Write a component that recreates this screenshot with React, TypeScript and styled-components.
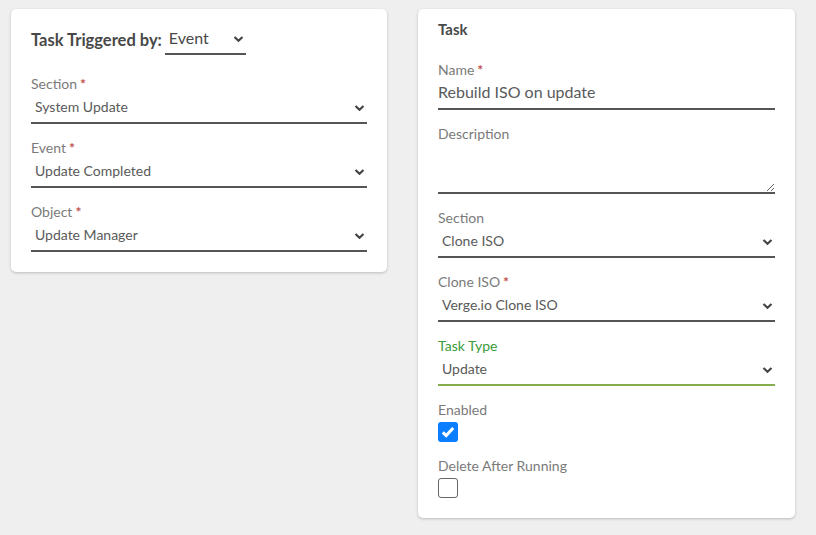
import React from "react";
import styled, { createGlobalStyle } from "styled-components";

const GlobalStyle = createGlobalStyle`
  html, body {
    margin: 0;
    padding: 0;
    background: #efefef;
    font-family: "Lato", "Liberation Sans", sans-serif;
  }
`;

const Page = styled.div`
  display: flex;
  align-items: flex-start;
  gap: 31px;
  padding: 9px 11px;
`;

const Card = styled.div<{ $width: number }>`
  width: ${(p) => p.$width}px;
  box-sizing: border-box;
  background: #fff;
  border-radius: 5px;
  box-shadow: 0 1px 3px rgba(0, 0, 0, 0.22);
  display: flex;
  flex-direction: column;
`;

const TriggerCard = styled(Card)`
  padding: 15px 20px 20px;
  gap: 20px;
`;

const TaskCard = styled(Card)`
  padding: 11px 20px 20px;
`;

const TitleRow = styled.div`
  display: flex;
  align-items: center;
  gap: 3px;
`;

const Title = styled.div`
  font-size: 16.5px;
  font-weight: 700;
  color: #484848;
  line-height: 20px;
`;

const CardTitle = styled.div`
  font-size: 15px;
  font-weight: 700;
  color: #484848;
  line-height: 18px;
  margin-bottom: 23px;
`;

const Fields = styled.div`
  display: flex;
  flex-direction: column;
  gap: 15px;
`;

const Field = styled.div`
  display: flex;
  flex-direction: column;
`;

const Label = styled.div<{ $focus?: boolean }>`
  font-size: 14px;
  line-height: 18px;
  color: ${(p) => (p.$focus ? "#3a9d3a" : "#7a7a7a")};
`;

const Required = styled.span`
  color: #c0504d;
  font-weight: 700;
  margin-left: 3px;
`;

const SelectWrap = styled.div<{ $focus?: boolean; $width?: number }>`
  position: relative;
  height: 31px;
  width: ${(p) => (p.$width ? `${p.$width}px` : "100%")};
  box-sizing: border-box;
  border-bottom: 2px solid ${(p) => (p.$focus ? "#86ad4c" : "#555")};
`;

const NativeSelect = styled.select<{ $big?: boolean }>`
  appearance: none;
  -webkit-appearance: none;
  border: none;
  outline: none;
  background: transparent;
  width: 100%;
  height: 100%;
  padding: 0 24px 2px 4px;
  font-family: inherit;
  font-size: ${(p) => (p.$big ? "16px" : "14px")};
  color: ${(p) => (p.$big ? "#484848" : "#5a5a5a")};
`;

const Chevron = styled.svg`
  position: absolute;
  right: 2px;
  top: 50%;
  transform: translateY(-50%);
  pointer-events: none;
`;

const TextInput = styled.input`
  height: 31px;
  box-sizing: border-box;
  border: none;
  border-bottom: 2px solid #555;
  outline: none;
  padding: 0 0 4px;
  font-family: inherit;
  font-size: 16px;
  color: #5a5a5a;
`;

const TextArea = styled.textarea`
  height: 51px;
  box-sizing: border-box;
  border: none;
  border-bottom: 2px solid #555;
  outline: none;
  padding: 0;
  font-family: inherit;
  font-size: 14px;
  color: #5a5a5a;
  resize: vertical;
`;

const Box = styled.div<{ $checked?: boolean }>`
  margin-top: 3px;
  width: 20px;
  height: 20px;
  box-sizing: border-box;
  border-radius: 3px;
  background: ${(p) => (p.$checked ? "#0b7dff" : "#fff")};
  border: ${(p) => (p.$checked ? "none" : "1px solid #666")};
  display: flex;
  align-items: center;
  justify-content: center;
`;

const ChevronIcon = () => (
  <Chevron width="11" height="7" viewBox="0 0 11 7">
    <path d="M1.5 1.5 L5.5 5.3 L9.5 1.5" fill="none" stroke="#444" strokeWidth="2.2" />
  </Chevron>
);

const Select = ({
  value,
  focus,
  width,
  big,
}: {
  value: string;
  focus?: boolean;
  width?: number;
  big?: boolean;
}) => (
  <SelectWrap $focus={focus} $width={width}>
    <NativeSelect $big={big} defaultValue={value}>
      <option>{value}</option>
    </NativeSelect>
    <ChevronIcon />
  </SelectWrap>
);

const Checkbox = ({ checked }: { checked?: boolean }) => (
  <Box $checked={checked}>
    {checked && (
      <svg width="14" height="12" viewBox="0 0 14 12">
        <path d="M1.8 6.4 L5.2 9.6 L12.2 2" fill="none" stroke="#fff" strokeWidth="3" />
      </svg>
    )}
  </Box>
);

const SelectField = ({
  label,
  value,
  required,
  focus,
}: {
  label: string;
  value: string;
  required?: boolean;
  focus?: boolean;
}) => (
  <Field>
    <Label $focus={focus}>
      {label}
      {required && <Required>*</Required>}
    </Label>
    <Select value={value} focus={focus} />
  </Field>
);

export default function App() {
  return (
    <>
      <GlobalStyle />
      <Page>
        <TriggerCard $width={376}>
          <TitleRow>
            <Title>Task Triggered by:</Title>
            <Select value="Event" width={81} big />
          </TitleRow>
          <Fields>
            <SelectField label="Section" value="System Update" required />
            <SelectField label="Event" value="Update Completed" required />
            <SelectField label="Object" value="Update Manager" required />
          </Fields>
        </TriggerCard>

        <TaskCard $width={377}>
          <CardTitle>Task</CardTitle>
          <Fields>
            <Field>
              <Label>
                Name<Required>*</Required>
              </Label>
              <TextInput defaultValue="Rebuild ISO on update" />
            </Field>
            <Field>
              <Label>Description</Label>
              <TextArea />
            </Field>
            <SelectField label="Section" value="Clone ISO" />
            <SelectField label="Clone ISO" value="Verge.io Clone ISO" required />
            <SelectField label="Task Type" value="Update" focus />
            <Field>
              <Label>Enabled</Label>
              <Checkbox checked />
            </Field>
            <Field>
              <Label>Delete After Running</Label>
              <Checkbox />
            </Field>
          </Fields>
        </TaskCard>
      </Page>
    </>
  );
}
